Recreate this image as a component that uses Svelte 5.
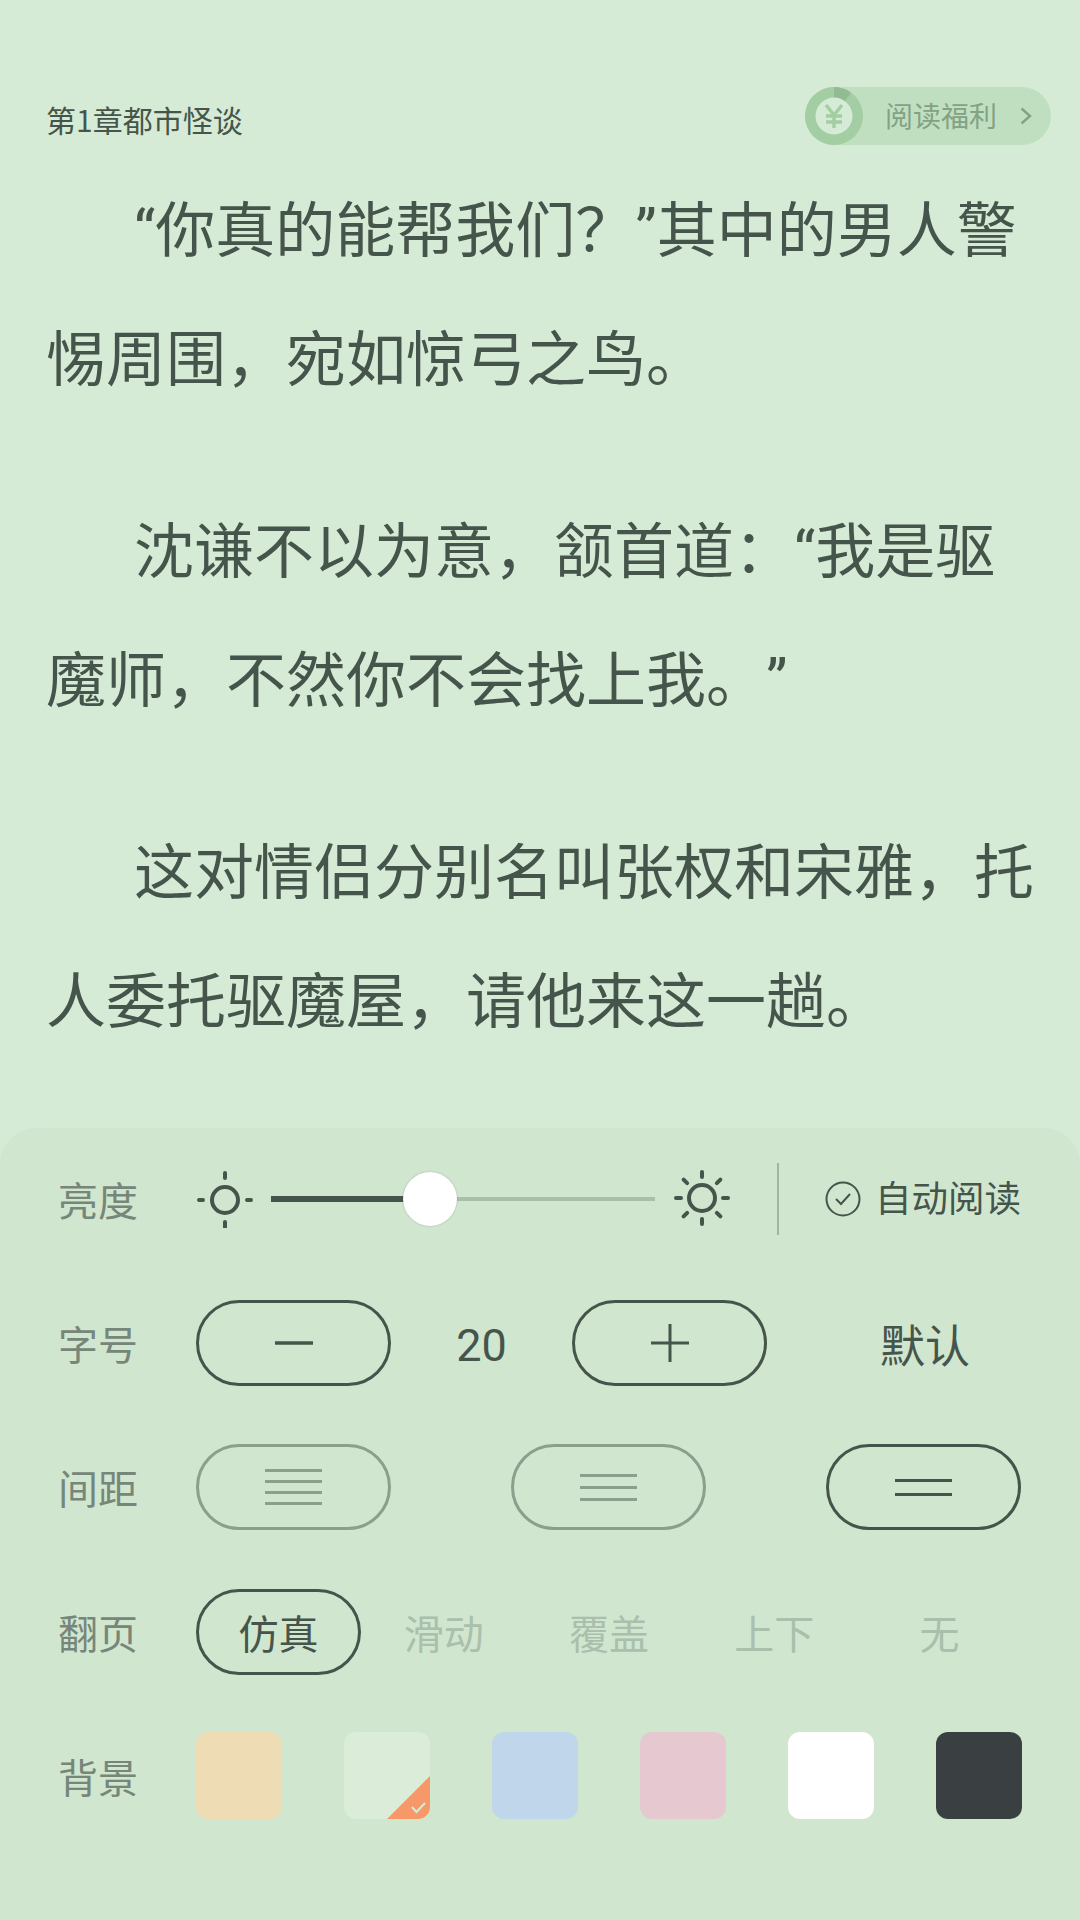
<script>
    // \uFF0C \uFF1A \uFF1F: the full-width comma, colon and question mark of the book text
    const paragraphs = [
        ["“你真的能帮我们\uFF1F”其中的男人警", "惕周围\uFF0C宛如惊弓之鸟。"],
        ["沈谦不以为意\uFF0C颔首道\uFF1A“我是驱", "魔师\uFF0C不然你不会找上我。”"],
        ["这对情侣分别名叫张权和宋雅\uFF0C托", "人委托驱魔屋\uFF0C请他来这一趟。"]
    ];
    const spacing = [
        { lines: [0, 1, 2, 3] },
        { lines: [0, 1, 2] },
        { lines: [0, 1], active: true }
    ];
    const pageModes = ["仿真", "滑动", "覆盖", "上下", "无"];
    const swatches = ["#eedcb5", "#dbecd9", "#c0d6ea", "#e6c8d0", "#ffffff", "#3a3f42"];
    const rays = [0, 45, 90, 135, 180, 225, 270, 315];

    // the quotes are narrow in the book font, the CJK ones are a full em wide
    const parts = (line) => line.split(/([“”])/).filter(Boolean);
</script>

{#snippet bookLine(text, cls)}
    <span class="line {cls}">{#each parts(text) as part}{#if part === "“" || part === "”"}<span class="q">{part}</span>{:else}{part}{/if}{/each}</span>
{/snippet}

<div class="page">
    <header class="top">
        <span class="chapter">第1章都市怪谈</span>
        <div class="reward">
            <svg class="coin" viewBox="0 0 58 58" width="58" height="58">
                <circle cx="29" cy="29" r="29" fill="#a3cda3" />
                <path d="M29 29 L29 0 A29 29 0 0 1 46 5.5 Z" fill="#93bb93" />
                <circle cx="29" cy="29" r="18.5" fill="#d6ebd6" />
                <path d="M21 18 L29 28 L37 18 M29 28 V41 M21 29 H37 M21 35 H37" fill="none" stroke="#a3cda3" stroke-width="3.4" />
            </svg>
            <span class="reward-text">阅读福利</span>
            <svg class="chev" viewBox="0 0 12 18" width="12" height="18">
                <path d="M1.5 1.5 L10 9 L1.5 16.5" fill="none" stroke="#83a285" stroke-width="2.4" />
            </svg>
        </div>
    </header>

    <main class="book">
        {#each paragraphs as para}
            <p>
                {@render bookLine(para[0], "first")}
                {@render bookLine(para[1], "")}
            </p>
        {/each}
    </main>

    <section class="panel">
        <div class="row bright">
            <span class="label">亮度</span>
            <svg class="sun" viewBox="0 0 58 58" width="58" height="58">
                <circle cx="29" cy="30" r="13" fill="none" stroke="#46554b" stroke-width="4" />
                <path d="M29 3 V8 M29 52 V57 M3 30 H7 M51 30 H55" stroke="#46554b" stroke-width="4" stroke-linecap="round" />
            </svg>
            <div class="slider">
                <div class="fill"></div>
                <div class="thumb"></div>
            </div>
            <svg class="sun" viewBox="0 0 60 60" width="60" height="60">
                <circle cx="30" cy="29" r="13" fill="none" stroke="#46554b" stroke-width="4" />
                {#each rays as a}
                    <path d="M30 3 V8" stroke="#46554b" stroke-width="4" stroke-linecap="round" transform="rotate({a} 30 29)" />
                {/each}
            </svg>
            <div class="divider"></div>
            <div class="auto">
                <svg viewBox="0 0 36 36" width="36" height="36">
                    <circle cx="18" cy="18" r="16.5" fill="none" stroke="#46554b" stroke-width="2" />
                    <path d="M11 18 L16 23 L25 13" fill="none" stroke="#46554b" stroke-width="2" />
                </svg>
                <span>自动阅读</span>
            </div>
        </div>

        <div class="row size">
            <span class="label">字号</span>
            <div class="pill">
                <svg viewBox="0 0 40 40" width="40" height="40"><path d="M1 20 H39" stroke="#46554b" stroke-width="3.5" /></svg>
            </div>
            <span class="num">20</span>
            <div class="pill">
                <svg viewBox="0 0 40 40" width="40" height="40"><path d="M1 20 H39 M20 1 V39" stroke="#46554b" stroke-width="3" /></svg>
            </div>
            <span class="reset">默认</span>
        </div>

        <div class="row gaps">
            <span class="label">间距</span>
            <div class="gap-opts">
                {#each spacing as s}
                    <div class="pill" class:dim={!s.active}>
                        <div class="bars" class:tight={s.lines.length === 4} class:wide={s.lines.length === 2}>
                            {#each s.lines as _}<i></i>{/each}
                        </div>
                    </div>
                {/each}
            </div>
        </div>

        <div class="row mode">
            <span class="label">翻页</span>
            <div class="modes">
                {#each pageModes as m, i}
                    <span class="mode-item" class:on={i === 0}>{m}</span>
                {/each}
            </div>
        </div>

        <div class="row bg">
            <span class="label">背景</span>
            <div class="swatches">
                {#each swatches as c, i}
                    <div class="swatch" style="background: {c}">
                        {#if i === 1}
                            <svg class="corner" viewBox="0 0 43 43" width="43" height="43">
                                <path d="M43 0 V43 H0 Z" fill="#f79869" />
                                <path d="M25 31 L29.5 36 L38 27" fill="none" stroke="#d9ead8" stroke-width="2" />
                            </svg>
                        {/if}
                    </div>
                {/each}
            </div>
        </div>
    </section>
</div>

<style>
    :global(body) {
        margin: 0;
    }
    .page {
        width: 1080px;
        height: 1920px;
        background: #d6ebd6;
        display: flex;
        flex-direction: column;
        font-family: "Noto Sans CJK SC", "Noto Sans", sans-serif;
        overflow: hidden;
    }
    .top {
        display: flex;
        justify-content: space-between;
        align-items: flex-start;
        padding: 87px 29px 0 46px;
        height: 58px;
    }
    .chapter {
        font-size: 30px;
        line-height: 44px;
        margin-top: 10px;
        color: #46554b;
    }
    .reward {
        width: 246px;
        height: 58px;
        border-radius: 29px;
        background: #c0dfc0;
        display: flex;
        align-items: center;
    }
    .coin {
        flex: none;
    }
    .reward-text {
        font-size: 28px;
        line-height: 40px;
        color: #83a285;
        margin: -2px 0 0 22px;
    }
    .chev {
        margin-left: 23px;
    }

    .book {
        flex: 1;
        min-height: 0;
        padding: 16px 30px 0 46px;
    }
    .book p {
        margin: 0 0 63px;
    }
    .line {
        display: block;
        font-size: 60px;
        line-height: 129px;
        color: #46554b;
        white-space: nowrap;
        text-spacing-trim: space-all;
    }
    .first {
        text-indent: 88px;
    }
    .q {
        font-family: Roboto, sans-serif;
        line-height: 0;
    }

    .panel {
        flex: none;
        height: 792px;
        box-sizing: border-box;
        background: #d1e6cf;
        border-radius: 36px 36px 0 0;
        padding: 35px 58px 0;
    }
    .row {
        display: flex;
        align-items: center;
    }
    .label {
        flex: none;
        width: 138px;
        font-size: 40px;
        color: #76877a;
    }
    .bright {
        height: 72px;
    }
    .sun {
        flex: none;
    }
    .slider {
        position: relative;
        flex: none;
        width: 384px;
        height: 4px;
        margin: 0 17px;
        background: #a9bfaa;
    }
    .fill {
        position: absolute;
        left: 0;
        top: -1px;
        height: 6px;
        width: 140px;
        background: #46554b;
    }
    .thumb {
        position: absolute;
        left: 132px;
        top: -25px;
        width: 54px;
        height: 54px;
        border-radius: 50%;
        background: #fff;
        box-shadow: 0 0 2px rgba(0, 0, 0, 0.25);
    }
    .divider {
        flex: none;
        width: 2px;
        height: 72px;
        background: #a0b5a2;
        margin-left: 45px;
    }
    .auto {
        display: flex;
        align-items: center;
        margin-left: 46px;
        gap: 14px;
        font-size: 36.5px;
        color: #46554b;
        white-space: nowrap;
    }
    .auto span {
        margin-top: -6px;
    }
    .pill {
        flex: none;
        box-sizing: border-box;
        width: 195px;
        height: 86px;
        border: 3px solid #46554b;
        border-radius: 43px;
        display: flex;
        align-items: center;
        justify-content: center;
    }
    .pill.dim {
        border-color: #8a9f8c;
    }
    .size {
        margin-top: 65px;
    }
    .num {
        width: 181px;
        padding-top: 4px;
        text-align: center;
        font-size: 45px;
        color: #46554b;
        font-family: Roboto, sans-serif;
    }
    .reset {
        margin-left: auto;
        margin-right: 52px;
        text-align: center;
        font-size: 45px;
        color: #46554b;
    }
    .gaps {
        margin-top: 58px;
    }
    .gap-opts {
        flex: 1;
        display: flex;
        justify-content: space-between;
        margin-right: 1px;
    }
    .bars {
        display: flex;
        flex-direction: column;
        gap: 9px;
        width: 57px;
    }
    .bars.tight {
        gap: 8px;
    }
    .bars.wide {
        gap: 11px;
    }
    .bars i {
        display: block;
        height: 3px;
        background: #8a9f8c;
    }
    .pill:not(.dim) .bars i {
        background: #46554b;
    }
    .mode {
        margin-top: 59px;
    }
    .modes {
        flex: 1;
        display: flex;
        align-items: center;
    }
    .mode-item {
        flex: 1;
        box-sizing: border-box;
        height: 86px;
        line-height: 80px;
        text-align: center;
        font-size: 40px;
        color: #aabfac;
        border: 3px solid transparent;
    }
    .mode-item.on {
        color: #46554b;
        border-color: #46554b;
        border-radius: 43px;
    }
    .bg {
        margin-top: 57px;
    }
    .swatches {
        flex: 1;
        display: flex;
        justify-content: space-between;
    }
    .swatch {
        position: relative;
        width: 86px;
        height: 87px;
        border-radius: 12px;
        overflow: hidden;
    }
    .corner {
        position: absolute;
        right: 0;
        bottom: 0;
    }
</style>
